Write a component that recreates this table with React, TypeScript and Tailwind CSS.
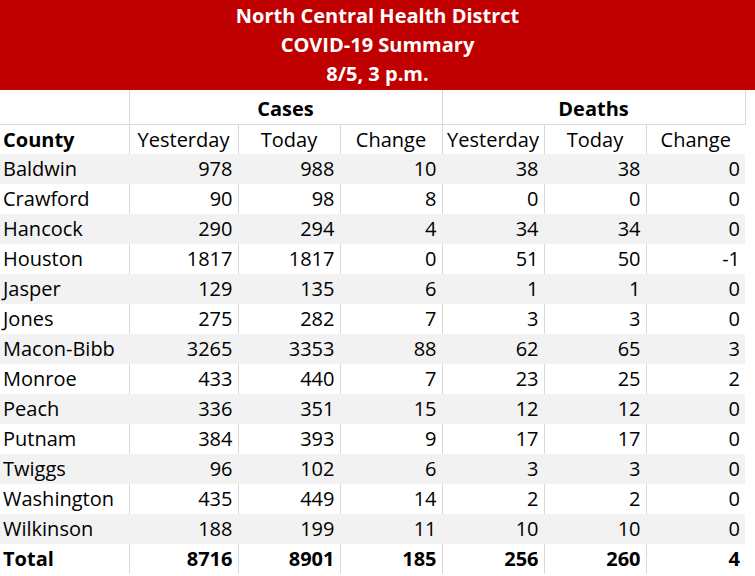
const rows: [string, number, number, number, number, number, number][] = [
  ["Baldwin", 978, 988, 10, 38, 38, 0],
  ["Crawford", 90, 98, 8, 0, 0, 0],
  ["Hancock", 290, 294, 4, 34, 34, 0],
  ["Houston", 1817, 1817, 0, 51, 50, -1],
  ["Jasper", 129, 135, 6, 1, 1, 0],
  ["Jones", 275, 282, 7, 3, 3, 0],
  ["Macon-Bibb", 3265, 3353, 88, 62, 65, 3],
  ["Monroe", 433, 440, 7, 23, 25, 2],
  ["Peach", 336, 351, 15, 12, 12, 0],
  ["Putnam", 384, 393, 9, 17, 17, 0],
  ["Twiggs", 96, 102, 6, 3, 3, 0],
  ["Washington", 435, 449, 14, 2, 2, 0],
  ["Wilkinson", 188, 199, 11, 10, 10, 0],
];

const widths = ["w-[129px]", "w-[109px]", "w-[102px]", "w-[102px]", "w-[102px]", "w-[102px]", "w-[99px]"];

export default function App() {
  return (
    <div className="w-[755px] h-[576px] bg-white text-black overflow-hidden" style={{ fontFamily: "'Open Sans', 'Liberation Sans', sans-serif" }}>
      {/* --- title band --- */}
      <div className="h-[90px] bg-[#c00000] text-white font-bold text-[20px] leading-[29px] text-center pt-[1px]">
        <div>North Central Health Distrct</div>
        <div>COVID-19 Summary</div>
        <div>8/5, 3 p.m.</div>
      </div>

      <table className="table-fixed border-collapse w-[745px] text-[20px]">
        <colgroup>
          {widths.map((w, i) => (
            <col key={i} className={w} />
          ))}
        </colgroup>
        <thead>
          <tr className="h-[34px]">
            <th className="border-b border-[#d9d9d9] p-0" />
            <th colSpan={3} className="border border-t-0 border-[#d9d9d9] font-bold text-center align-bottom pb-0 leading-[30px]">
              Cases
            </th>
            <th colSpan={3} className="border border-t-0 border-[#d9d9d9] font-bold text-center align-bottom pb-0 leading-[30px]">
              Deaths
            </th>
          </tr>
          <tr className="h-[29px] leading-[29px]">
            <th className="border-r border-[#d9d9d9] font-bold text-left pl-[3px]">County</th>
            {["Yesterday", "Today", "Change", "Yesterday", "Today", "Change"].map((h, i) => (
              <th key={i} className={`font-normal text-center p-0 ${i < 5 ? "border-r border-[#d9d9d9]" : ""}`}>
                {h}
              </th>
            ))}
          </tr>
        </thead>
        <tbody>
          {rows.map((r, idx) => {
            const striped = idx % 2 === 0;
            const line = striped ? "border-[#f2f2f2]" : "border-[#d9d9d9]";
            return (
              <tr key={r[0]} className={`h-[30px] leading-[30px] ${striped ? "bg-[#f2f2f2]" : "bg-white"}`}>
                <td className={`border-r ${line} pl-[3px] text-left`}>{r[0]}</td>
                {r.slice(1).map((v, i) => (
                  <td key={i} className={`pr-[5px] text-right ${i < 5 ? `border-r ${line}` : ""}`}>
                    {v}
                  </td>
                ))}
              </tr>
            );
          })}
          <tr className="h-[30px] leading-[30px] font-bold">
            <td className="border-r border-[#d9d9d9] pl-[3px]">Total</td>
            {[8716, 8901, 185, 256, 260, 4].map((v, i) => (
              <td key={i} className={`pr-[5px] text-right ${i < 5 ? "border-r border-[#d9d9d9]" : ""}`}>
                {v}
              </td>
            ))}
          </tr>
        </tbody>
      </table>
    </div>
  );
}
